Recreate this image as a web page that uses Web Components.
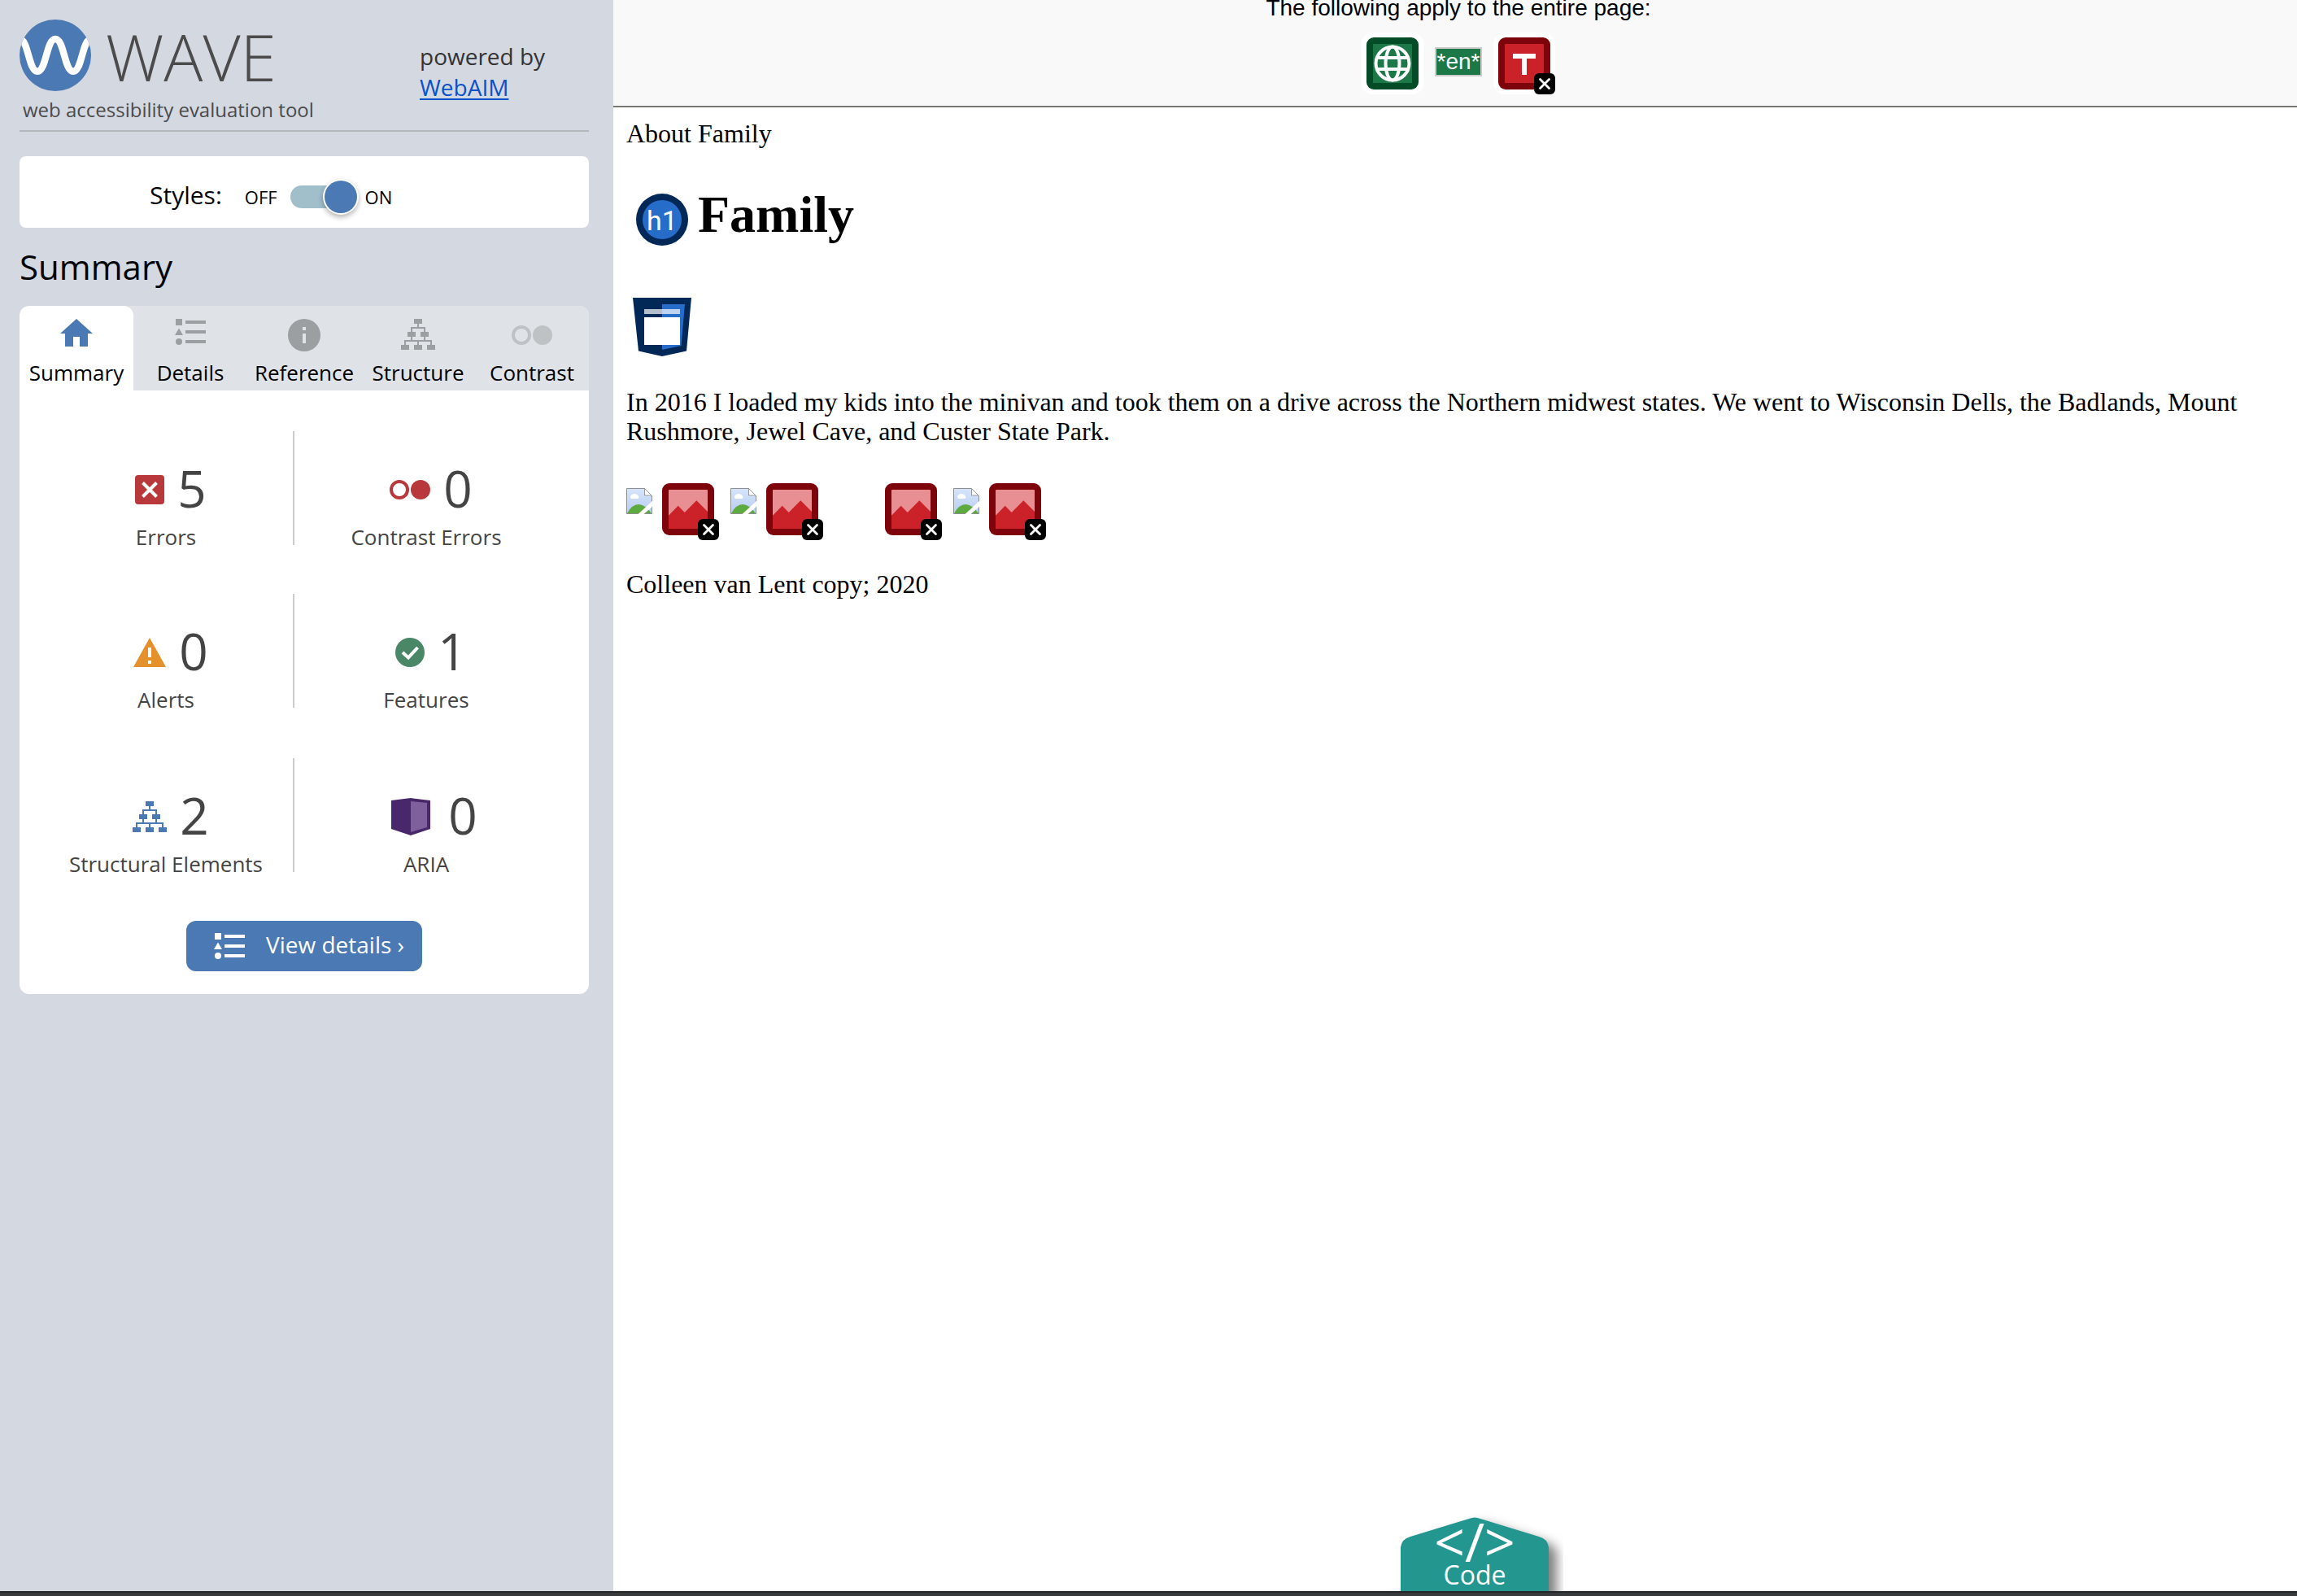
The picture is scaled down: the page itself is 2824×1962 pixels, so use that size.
<!DOCTYPE html>
<html lang="en">
<head>
<meta charset="utf-8">
<title>WAVE Report</title>
<style>
html, body { height: 100%; margin: 0; }
body { background: #fff; font-family: "Open Sans", "Noto Sans", sans-serif; }
</style>
</head>
<body>
<wave-app></wave-app>
<script>
const define = (name, html, setup) => customElements.define(name, class extends HTMLElement {
  constructor() {
    super();
    this.attachShadow({ mode: 'open' }).innerHTML = html;
  }
  connectedCallback() { if (setup) setup(this, this.shadowRoot); }
});

/* Icon set: [width, height, markup] */
const frame = (edge, fill, art) =>
  `<rect width="76" height="76" rx="14" fill="#fff"/><rect x="6" y="6" width="64" height="64" rx="9" fill="${edge}"/><rect x="14" y="14" width="48" height="48" rx="1" fill="${fill}"/><g transform="translate(6 6)">${art}</g>`;
const cross = `<rect x="50" y="50" width="26" height="26" rx="6" fill="#000"/><path d="M57.500 57.500l11 11m0-11l-11 11" stroke="#fff" stroke-width="2.800" stroke-linecap="round"/>`;
const ICONS = {
  logo: [88, 88, `<clipPath id="c"><circle cx="44" cy="44" r="44"/></clipPath><circle cx="44" cy="44" r="44" fill="#4b79b4"/><path clip-path="url(#c)" d="M0 24C11 24 11 63.700 22 63.700S33 24 44 24S55 63.700 66 63.700S77 24 88 24" fill="none" stroke="#fff" stroke-width="8.500"/>`],
  home: [40, 34, `<path fill="currentColor" d="M20 0L40 18H34V34H24V22H16V34H6V18H0Z"/>`],
  list: [38, 32, `<g fill="currentColor"><path d="M1 0h8v8H1zM5 11.500L10 20H0zM13 2h25v4H13zM13 14h25v4H13zM13 26h25v4H13z"/><circle cx="5" cy="28" r="4"/></g>`],
  info: [40, 40, `<path fill="currentColor" fill-rule="evenodd" d="M20 0a20 20 0 1 1 0 40a20 20 0 1 1 0-40zM18 10h4v4h-4zM18 18h4v12h-4z"/>`],
  tree: [42, 38, `<path fill="currentColor" d="M16 0h10v6H16zM8 16h10v6H8zM24 16h10v6H24zM0 32h10v6H0zM16 32h10v6H16zM32 32h10v6H32zM20 6h2v4h8v6h-2v-4H14v4h-2v-6h8zM12 22h2v4h14v-4h2v4h8v6h-2v-4H22v4h-2v-4H6v4H4v-6h8z"/>`],
  contrast: [50, 24, `<circle cx="12" cy="12" r="10" fill="none" stroke="currentColor" stroke-width="4"/><circle cx="38" cy="12" r="12" fill="currentColor"/>`],
  error: [36, 36, `<rect width="36" height="36" rx="4" fill="#b9383c"/><path d="M9.500 9.500l17 17m0-17l-17 17" stroke="#fff" stroke-width="4"/>`],
  alert: [40, 36, `<path fill="#e4912c" d="M20 0L40 36H0z"/><path fill="#fff" d="M18 12h4v12h-4zM18 28h4v4h-4z"/>`],
  feature: [36, 36, `<circle cx="18" cy="18" r="18" fill="#498767"/><path d="M9 18l7 6.500L27.500 12" fill="none" stroke="#fff" stroke-width="4"/>`],
  aria: [62, 46, `<g transform="translate(8)"><path fill="#48276a" d="M0 3L24 0L48 3V38L24 46L0 38Z"/><path fill="#7e609d" d="M24 4L44 6V36L24 42Z"/></g>`],
  globe: [76, 76, frame('#044c28', '#1d7848', `<g fill="none" stroke="#fff" stroke-width="4"><circle cx="32" cy="32" r="20.500"/><ellipse cx="32" cy="32" rx="8.500" ry="20.500"/><path d="M13 25H51M13 39H51"/></g>`)],
  title: [76, 76, frame('#7e040b', '#cb2128', `<path fill="#fff" d="M18 20h28v6H35v20h-6V26H18z"/>`+ cross)],
  image: [76, 76, frame('#7e040b', '#e78f92', `<path fill="#cb2128" d="M8 39.700L19.700 27.700L27.700 36L42.300 21.300L56 35V55a1 1 0 0 1-1 1H9a1 1 0 0 1-1-1z"/>`) + cross.replace(/^/, '<g transform="translate(0 0)">') + '</g>'],
  heading: [64, 64, `<circle cx="32" cy="32" r="32" fill="#022857"/><circle cx="32" cy="32" r="24" fill="#266dca"/><text x="32" y="45" text-anchor="middle" font-family="Roboto, sans-serif" font-size="34" font-weight="400" fill="#fff">h1</text>`],
  header: [72, 72, `<path fill="#022857" d="M0 0H72L66 65.500L36 72L7 65.500Z"/><path fill="#266dca" d="M36 8H64L59.500 59L36 64Z"/><path fill="#fff" fill-opacity=".7" d="M14 14H58V20H14Z"/><path fill="#fff" d="M14 24H58V58H14Z"/>`],
  broken: [32, 32, `<defs><linearGradient id="s" x2="0" y2="1"><stop stop-color="#d6e5fb"/><stop offset="1" stop-color="#b7ccf0"/></linearGradient><clipPath id="p"><path d="M0 0H22L32 10V32H0Z"/></clipPath></defs><g clip-path="url(#p)"><rect width="32" height="32" fill="url(#s)"/><path fill="#fff" d="M6 13a3 3 0 0 1 0-4.500a5 4 0 0 1 8 0q3 4 0 4.500z"/><path fill="#5dab40" d="M1 31Q7 20 15 20T31 31Z"/></g><path fill="#fff" stroke="#999" d="M22.500 .500V9H31Z"/><path d="M22.500 .500H.500V31.500H31.500V9" fill="none" stroke="#8f8f8f"/><path fill="#fff" d="M33 15V22L21 32.500H14Z"/>`]
};
/* The cross badge ends flush with the white halo */
ICONS.title[2] = frame('#7e040b', '#cb2128', `<path fill="#fff" d="M18 20h28v6H35v20h-6V26H18z"/>`) + cross;
ICONS.image[2] = frame('#7e040b', '#e78f92', `<path fill="#cb2128" d="M8 39.700L19.700 27.700L27.700 36L42.300 21.300L56 35V55a1 1 0 0 1-1 1H9a1 1 0 0 1-1-1z"/>`) + cross;

define('wave-icon', `<style>:host{display:block;flex:none}svg{display:block;overflow:visible}</style>`, (el, root) => {
  const [w, h, art] = ICONS[el.getAttribute('name')];
  root.innerHTML += `<svg width="${w}" height="${h}" viewBox="0 0 ${w} ${h}" aria-hidden="true">${art}</svg>`;
});

define('wave-header', `
<style>
:host{display:flex;border-bottom:2px solid #b2b8bb;padding-bottom:8px;color:#4b4b4b}
.brand{width:492px}
.logo{display:flex;gap:18px;font-size:80px;line-height:90px;font-weight:300}
.tag{margin:4px 0 0 4px;font-size:24px;line-height:34px}
.by{margin:26px 0 0;font-size:28px;line-height:38px;color:#333}
a{display:block;color:#0b51c8;text-underline-offset:3px}
</style>
<div class="brand"><div class="logo"><wave-icon name="logo"></wave-icon><span>WAVE</span></div>
<p class="tag">web accessibility evaluation tool</p></div>
<p class="by">powered by <a href="#webaim">WebAIM</a></p>`);

define('wave-styles', `
<style>
:host{display:flex;align-items:center;height:76px;padding:12px 0 0 160px;border-radius:8px;background:#fff;color:#000;font-size:22px}
label{font-size:30px;line-height:40px;padding-bottom:4px;margin-right:28px}
input{appearance:none;display:flex;align-items:center;justify-content:flex-end;width:82px;height:28px;margin:0 10px 0 16px;border-radius:14px;background:#a0bfcb}
input::before{content:"";flex:none;width:40px;height:40px;border-radius:50%;background:#4b79b4;box-shadow:0 0 0 2px #fff,0 3px 6px 2px rgba(0,0,0,.3)}
input:not(:checked){justify-content:flex-start}
</style>
<label for="t">Styles:</label><span>OFF</span><input id="t" type="checkbox" role="switch" checked><span>ON</span>`);

define('wave-tab', `
<style>
:host{display:block;flex:1 1 0}
button{display:flex;flex-direction:column;align-items:center;width:100%;height:104px;padding:16px 0 0;border:0;background:none;font:26px/32px "Open Sans",sans-serif;color:#000}
.i{display:flex;height:40px;margin-bottom:10px;color:#9b9fa1}
:host([selected]) button{background:#fff;border-radius:12px 12px 0 0}
:host([selected]) .i{color:#4b79b4}
:host([pale]) .i{color:#bfc2c5;padding-top:8px;height:32px}
</style>
<button role="tab"><span class="i"><slot name="icon"></slot></span><slot></slot></button>`);

define('wave-stat', `
<style>
:host{display:block;height:140px;box-sizing:border-box;color:#444;text-align:center}
.n{display:flex;justify-content:center;gap:16px;padding:30px 0 0 12px;font-size:62px;line-height:80px}
.i{display:flex;align-items:center;padding-top:4px}
.l{margin:10px 0 0;font-size:26px;line-height:20px;white-space:nowrap}
:host([left]){border-right:2px solid #ccc}
</style>
<div class="n"><span class="i"><slot name="icon"></slot></span><slot name="count"></slot></div><p class="l"><slot></slot></p>`);

define('wave-summary', `
<style>
:host{display:block}
h2{margin:0;font-size:42px;line-height:96px;font-weight:400;color:#000}
.card{background:#fff;border-radius:12px;padding-bottom:28px;overflow:hidden}
.tabs{display:flex;background:#dfe2e7}
.grid{display:grid;grid-template-columns:314px 324px;row-gap:60px;padding:50px 38px 60px 24px}
.go{display:flex;align-items:center;gap:26px;width:max-content;height:62px;margin:0 auto;padding:0 22px 0 34px;border:0;border-radius:12px;background:#4b79b4;color:#fff;font:28px/36px "Open Sans",sans-serif}
.go span{padding-bottom:4px}
.red{color:#b9383c}.blue{color:#4b79b4}
.last{padding-top:2px}
</style>
<h2>Summary</h2>
<div class="card">
<div class="tabs" role="tablist">
<wave-tab selected><wave-icon slot="icon" name="home"></wave-icon>Summary</wave-tab>
<wave-tab><wave-icon slot="icon" name="list"></wave-icon>Details</wave-tab>
<wave-tab><wave-icon slot="icon" name="info"></wave-icon>Reference</wave-tab>
<wave-tab><wave-icon slot="icon" name="tree"></wave-icon>Structure</wave-tab>
<wave-tab pale><wave-icon slot="icon" name="contrast"></wave-icon>Contrast</wave-tab>
</div>
<div class="grid">
<wave-stat left><wave-icon slot="icon" name="error"></wave-icon><span slot="count">5</span>Errors</wave-stat>
<wave-stat><wave-icon class="red" slot="icon" name="contrast"></wave-icon><span slot="count">0</span>Contrast Errors</wave-stat>
<wave-stat left><wave-icon slot="icon" name="alert"></wave-icon><span slot="count">0</span>Alerts</wave-stat>
<wave-stat><wave-icon slot="icon" name="feature"></wave-icon><span slot="count">1</span>Features</wave-stat>
<div class="last"><wave-stat left><wave-icon class="blue" slot="icon" name="tree"></wave-icon><span slot="count">2</span>Structural Elements</wave-stat></div>
<div class="last"><wave-stat><wave-icon slot="icon" name="aria"></wave-icon><span slot="count">0</span>ARIA</wave-stat></div>
</div>
<button class="go"><wave-icon name="list"></wave-icon><span>View details ›</span></button>
</div>`);

define('wave-sidebar', `
<style>
:host{display:flex;flex-direction:column;box-sizing:border-box;padding:24px 30px 0 24px;background:#d4d8e0}
wave-styles{margin-top:30px}
</style>
<wave-header></wave-header><wave-styles></wave-styles><wave-summary></wave-summary>`);

define('wave-page-bar', `
<style>
:host{display:block;padding:0 0 14px 8px;border-bottom:2px solid #757972;background:#f9f9f9;color:#000;text-align:center;font-family:"Liberation Sans",Arial,sans-serif;font-size:28px;line-height:32px}
p{margin:-6px 0 14px}
div{display:flex;justify-content:center;align-items:center;gap:14px}
.lang{box-sizing:border-box;width:58px;height:36px;margin-bottom:4px;border:2px solid #ccc;background:#1d7848;color:#fff}
</style>
<p>The following apply to the entire page:</p>
<div><wave-icon name="globe"></wave-icon><span class="lang">*en*</span><wave-icon name="title"></wave-icon></div>`);

define('broken-picture', `
<style>
:host{display:flex;gap:6px}
.b{width:32px;padding-top:12px}
:host([blank]) .b{width:50px}
:host([blank]) .b wave-icon{display:none}
</style>
<span class="b"><wave-icon name="broken"></wave-icon></span><wave-icon name="image"></wave-icon>`);

define('family-page', `
<style>
:host{display:block;padding:14px 16px;color:#000;font-family:"Liberation Serif","Times New Roman",serif;font-size:32px;line-height:36px}
p{margin:0}
h1{display:flex;align-items:flex-start;gap:12px;margin:46px 0 64px 12px;font-size:64px;line-height:72px}
h1 wave-icon{padding-top:10px}
.header{margin:0 0 38px 8px}
.row{display:flex;gap:14px;margin:40px 0 36px}
</style>
<p>About Family</p>
<h1><wave-icon name="heading"></wave-icon>Family</h1>
<wave-icon class="header" name="header"></wave-icon>
<p>In 2016 I loaded my kids into the minivan and took them on a drive across the Northern midwest states. We went to Wisconsin Dells, the Badlands, Mount Rushmore, Jewel Cave, and Custer State Park.</p>
<div class="row"><broken-picture></broken-picture><broken-picture></broken-picture><broken-picture blank></broken-picture><broken-picture></broken-picture></div>
<p>Colleen van Lent copy; 2020</p>`);

/* Pull-up tab that floats over the bottom edge of the page */
define('wave-code-tab', `
<style>
:host{position:absolute;bottom:0;left:50%;margin-left:-67px;width:200px;height:120px;padding-top:20px;box-sizing:border-box;overflow:hidden}
button{display:grid;align-items:start;width:182px;height:100px;padding:0;border:0;background:none;color:#fff;font-family:"Open Sans",sans-serif;text-align:center}
svg{grid-area:1/1;display:block;overflow:visible;filter:drop-shadow(10px 8px 7px rgba(0,0,0,.5))}
.t{grid-area:1/1;position:relative;display:block}
b{display:block;margin-top:8px;font-size:66px;line-height:60px;font-weight:500}
i{display:block;font-style:normal;font-size:32px;line-height:24px}
</style>
<button><svg width="182" height="100" viewBox="0 0 182 100" aria-hidden="true"><path fill="#249690" d="M0 112V46Q1 36 12 33L84 11Q91 8 98 11L170 33Q181 36 182 46V112Z"/></svg><span class="t"><b>&lt;/&gt;</b><i>Code</i></span></button>`);

define('wave-app', `
<style>
:host{display:grid;grid-template:minmax(0,1fr) 6px/754px minmax(0,1fr);height:100%}
main{position:relative;overflow:hidden;background:#fff}
footer{grid-column:1/-1;box-sizing:border-box;border-top:2px solid #262728;background:#38393b}
</style>
<wave-sidebar></wave-sidebar>
<main><wave-page-bar></wave-page-bar><family-page></family-page><wave-code-tab></wave-code-tab></main>
<footer></footer>`);
</script>
</body>
</html>
